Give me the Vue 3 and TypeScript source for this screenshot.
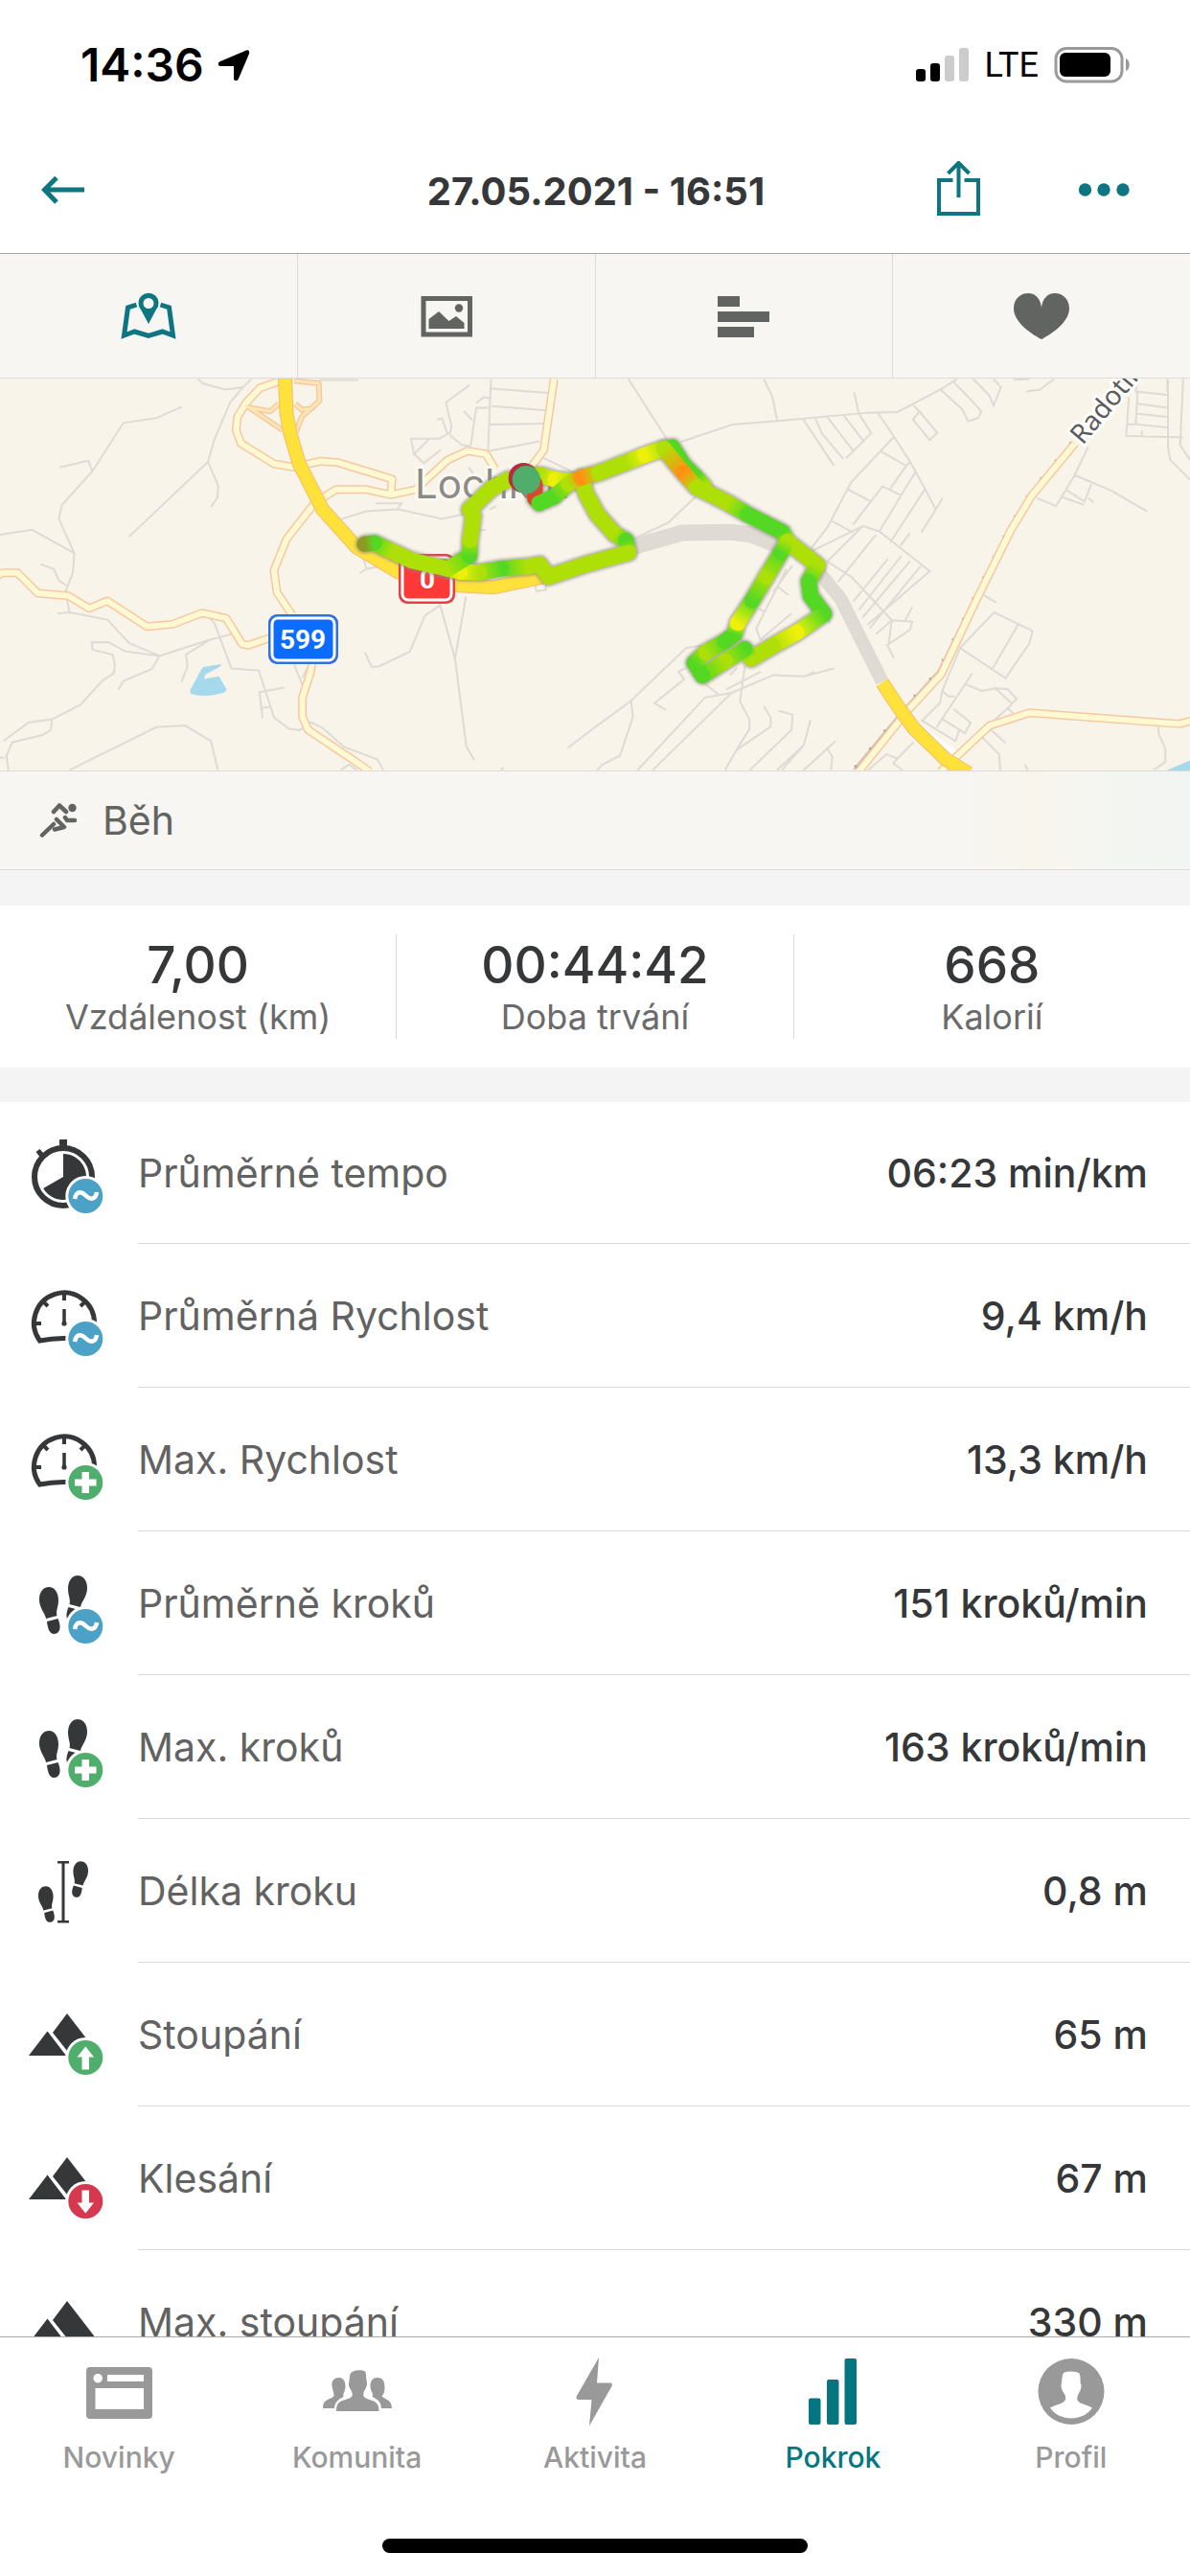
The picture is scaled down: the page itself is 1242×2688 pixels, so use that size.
<script setup lang="ts">
type Badge = 'average' | 'max' | 'up' | 'down' | null
type Icon = 'stopwatch' | 'gauge' | 'steps' | 'stride' | 'mountains'

interface Metric {
  icon: Icon
  badge: Badge
  label: string
  value: string
}

interface TrackPoint {
  x: number
  y: number
  color: string
}

const summary = [
  { value: '7,00', label: 'Vzdálenost (km)' },
  { value: '00:44:42', label: 'Doba trvání' },
  { value: '668', label: 'Kalorií' },
]

const metrics: Metric[] = [
  { icon: 'stopwatch', badge: 'average', label: 'Průměrné tempo', value: '06:23 min/km' },
  { icon: 'gauge', badge: 'average', label: 'Průměrná Rychlost', value: '9,4 km/h' },
  { icon: 'gauge', badge: 'max', label: 'Max. Rychlost', value: '13,3 km/h' },
  { icon: 'steps', badge: 'average', label: 'Průměrně kroků', value: '151 kroků/min' },
  { icon: 'steps', badge: 'max', label: 'Max. kroků', value: '163 kroků/min' },
  { icon: 'stride', badge: null, label: 'Délka kroku', value: '0,8 m' },
  { icon: 'mountains', badge: 'up', label: 'Stoupání', value: '65 m' },
  { icon: 'mountains', badge: 'down', label: 'Klesání', value: '67 m' },
  { icon: 'mountains', badge: null, label: 'Max. stoupání', value: '330 m' },
]

const badgeColor: Record<string, string> = {
  average: '#4ba2c6',
  max: '#4fae6b',
  up: '#4fae6b',
  down: '#d63850',
}

// Track colours run from slow (red) to fast (green).
const pace: Record<string, string> = {
  g: '#55d824',
  l: '#aee008',
  y: '#eef00a',
  o: '#ff9212',
  r: '#d8482c',
  b: '#8f9a22',
}

function track(source: string): TrackPoint[] {
  return source.split(' ').map((item) => {
    const [x, y, c] = item.split(',')
    return { x: Number(x), y: Number(y), color: pace[c] }
  })
}

const tracks: TrackPoint[][] = [
  track('940,115,l 965,110,g 1000,165,g 1040,205,g 1064,232,l'),
  track('680,205,l 695,255,l 730,320,l 785,382,l 820,402,g 828,440,l 700,475,l 578,515,l 550,477,l 510,484,l 430,490,g 360,502,l 300,500,y 262,491,l 150,465,l 85,435,l 32,410,g 2,413,b'),
  track('262,491,l 330,450,g 332,400,l 342,325,l 330,305,l 400,238,l 450,212,l 505,200,l 555,198,l 600,212,y 645,215,l'),
  track('535,225,r 535,270,r 548,285,g 595,265,g 640,225,l 680,205,o 735,190,l 820,158,l 880,134,y 938,114,l 1000,190,o 1042,236,l 1075,252,l 1140,285,l 1200,320,g 1310,376,g 1326,405,l 1420,480,l 1392,530,g 1398,575,g 1440,632,g 1355,690,y 1280,732,l 1212,772,l 1192,742,g 1130,780,l 1060,825,g 1034,785,g 1070,752,l 1130,718,g 1160,695,g 1170,660,y 1215,590,g 1260,515,l 1305,440,g 1326,405,l'),
]

const segments = tracks.flatMap((points, t) =>
  points.slice(1).map((to, i) => ({ id: `pace-${t}-${i}`, from: points[i], to })),
)

const trackLines = tracks.map((points) => points.map((p) => `${p.x},${p.y}`).join(' '))

const streetsWest =
  'M158 313L233 292L243 325L325 178L413 163L479 129M243 325L163 427L155 468L196 573L192 632L172 690L183 752L152 756M196 573L85 502L0 517M108 606L142 621L155 655L174 670' +
  'M522 45L535 59L594 77L640 70L662 45M640 70L606 117L566 225L548 296L575 368L573 404L556 433M548 296L340 523M840 48H945' +
  'M183 752L283 774L340 845L420 884L330 870L285 842L242 843L244 865L297 880L303 912L300 936L269 960L212 1032L137 1076L75 1086L9 1142M137 1076L134 1108L112 1124L32 1146L17 1186L22 1230M0 1193H12' +
  'M183 1230L412 1100L488 1095L556 1142L574 1230M420 884L400 924L325 960L312 986M420 884L553 835L610 818M553 835L490 880L494 917L478 963M553 770L565 785L610 922L682 928L722 1070L760 1104L790 1109L820 1085L850 1102L907 1160L995 1198L1010 1230M749 980L684 994L692 1072M692 1042L712 1038M775 910L797 972M797 950L812 915' +
  'M898 1230L920 1213L940 1230M962 874L979 917L998 916L1080 871L1120 762L1160 730L1199 892L1228 704M1199 892L1229 1158L1250 1200M1496 1163L1568 1100M1320 1230L1328 1222M898 470L965 446L1050 440L1165 469L1240 450M990 422H1058L1047 440' +
  'M950 560L966 620L948 633M966 620L1010 612M1410 670L1414 688L1438 684L1440 665M1255 502H1280M1290 440L1308 430M1237 63L1175 116L1190 188L1186 208L1157 226H1083L1091 272L1130 228M1091 272L1117 300L1162 259M1152 168L1165 164L1180 215M1186 215L1216 244L1240 250L1255 132H1290M1222 142L1245 170M1255 118L1275 100L1290 103' +
  'M1294 45L1286 262L1310 310M1296 74L1444 87M1296 127L1440 140M1290 183L1432 180M1290 263L1422 234M1432 284L1550 348M1235 312L1258 350'

const streetsEast =
  'M88 45L190 228M225 236L362 183L482 172L720 147L797 145L912 76L954 45M445 45L467 97L480 170M683 85L695 150L728 208L662 285M548 166L630 308M580 163L598 210L655 288M612 160L680 262M655 155L710 236M910 76L968 137L983 173L1010 163L1018 143L990 107L943 52M997 45L1040 96L1050 126L1070 70L1050 45M1103 47L1145 45M1137 83L1173 77L1210 45M836 120L855 143L838 168L882 230L902 208L855 143' +
  'M745 147L788 220L830 295L870 378L898 440L860 510M898 440L916 406M788 220L675 358L612 495L565 565M750 262L820 308L832 294M820 308L778 377M664 378L724 414M622 474L680 510M808 398L758 370L680 486M845 325L750 505M870 378L778 540M565 570L706 490L750 507L882 627L718 790M706 490L612 598L676 645L782 776L836 780L830 805L774 848L770 850L787 890M782 776L740 818M836 737L818 775M740 517L640 660M772 590L680 720M808 580L695 745M830 597L705 768M858 612L724 800M830 512L805 550M782 776L774 848' +
  'M265 402L193 480L105 527M505 620L425 800L436 835L518 755M483 676L510 700M432 740L446 750M520 610L470 690M610 765L620 785' +
  'M1300 250L1264 336L1215 430L1165 406M1264 336L1360 383L1455 446M1240 380L1290 416L1308 363M1230 402L1288 426M1300 405L1313 418M1407 100L1400 217L1550 222M1424 83L1508 93M1430 83L1425 182L1508 192M1510 45V250L1516 290L1568 350M1430 120L1508 132M1430 150L1508 160M1550 45L1542 245L1568 290M1402 182H1425M1441 200V217M1424 83L1432 45M1508 83V45' +
  'M1025 700L1057 722M962 860L1052 752L1153 808L1145 845L1082 951L962 860L915 990L932 1007H948M1116 787L1045 928M994 937L900 1100M977 970L1020 990L1055 982L1087 984L1111 1014L1088 1042L1040 1092M1055 982L1100 1030M915 990L910 1025L862 1080L950 1142L960 1108M945 1045L990 1086L975 1118L915 1075M1040 1105L1082 1148M1020 1130L1065 1182L1068 1230M1085 1040L1102 1058' +
  'M0 1100L95 1020L240 860L280 852M95 1020L100 1068L66 1186L20 1213L5 1230M112 1230L290 1010L360 996L470 942L552 946L630 922M552 946L578 932M290 970L325 1000M240 920L220 932L235 955L157 1027L187 1048M157 1027L170 1015M152 1230L360 996M345 986L437 932M395 915L382 1022L407 1077V1106L372 1170L343 1230M445 1037L463 1070V1098L372 1170M483 1050L521 1062L518 1108L408 1230M568 1078L550 1155L480 1230M634 1142L550 1230M612 1165L625 1188L622 1230M550 1155L492 1230M355 942L375 920' +
  'M720 1230L768 1182L797 1195L840 1145M797 1195L786 1210L810 1230M1485 1098V1118L1503 1165V1205L1472 1230M1133 1213L1140 1230'

const roadsWest = [
  'M-5 640L8 632H46L100 694L180 702L235 740L283 717L387 795L455 788L532 754L596 770L638 848L654 852L720 826',
  'M770 760L730 692L722 625L755 530L830 420L885 380H965L1030 396L1095 380L1180 290L1232 263L1280 272L1305 318',
  'M1030 396L1033 348L890 298L845 294L775 312L722 302L635 240L622 200L626 160L648 118L685 72L735 52',
  'M1460 45L1433 260L1400 312',
  'M823 905L818 935L797 1010V1070L812 1108L925 1195L975 1235',
]
const rampsWest = 'M648 130L712 143L735 120M648 125L745 200M775 50L840 58L842 110L795 160L780 205M842 110L820 135L795 138L778 120'
const roadsEast = [
  'M1265 240L1150 400L1095 505L1005 715L912 940L820 1055L695 1235',
  'M910 1235L1040 1095L1145 1056L1540 1090L1575 1080',
]
const motorwayWest = 'M751 40L755 150L765 210L788 300L850 440L940 555L1050 630L1170 668L1300 676L1430 645'
const motorwayEast = 'M757 965L800 1040L840 1103L925 1198L985 1240'

const navItems = [
  { id: 'news', label: 'Novinky' },
  { id: 'community', label: 'Komunita' },
  { id: 'activity', label: 'Aktivita' },
  { id: 'progress', label: 'Pokrok' },
  { id: 'profile', label: 'Profil' },
]
</script>

<template>
  <div class="app">
    <div class="status">
      <div class="status-time">
        <span>14:36</span>
        <svg width="34" height="34" viewBox="225 50 34 34" aria-hidden="true">
          <path d="M254 52C257 50 259 52 258 55L247 81C246 84 242 84 242 81V68H229C225 68 225 64 228 63Z" />
        </svg>
      </div>
      <div class="status-right">
        <svg width="56" height="36" viewBox="957 50 56 36" aria-hidden="true">
          <rect x="957" y="72" width="10" height="13" rx="3" />
          <rect x="972" y="66" width="10" height="19" rx="3" />
          <rect x="987" y="58" width="10" height="27" rx="3" fill="#ccc" />
          <rect x="1002" y="50" width="10" height="35" rx="3" fill="#ccc" />
        </svg>
        <span class="network">LTE</span>
        <svg width="80" height="38" viewBox="1099 49 80 38" aria-hidden="true">
          <rect x="1101" y="50.5" width="69" height="34.5" rx="11" fill="none" stroke="#9a9a9a" stroke-width="3" />
          <rect x="1105" y="55" width="53" height="25" rx="6" />
          <path d="M1174 61C1179 63 1179 72 1174 74Z" fill="#9a9a9a" />
        </svg>
      </div>
    </div>

    <header class="header">
      <div class="header-side">
        <button type="button" class="icon-button" aria-label="Zpět">
          <svg width="48" height="48" viewBox="43 175 48 48" fill="none" stroke="currentColor" stroke-width="5">
            <path d="M89 199H48M60 186.500L47.500 199L60 212" />
          </svg>
        </button>
      </div>
      <h1>27.05.2021 - 16:51</h1>
      <div class="header-side header-actions">
        <button type="button" class="icon-button" aria-label="Sdílet">
          <svg width="48" height="60" viewBox="973 168 48 60" fill="none" stroke="currentColor" stroke-width="4">
            <path d="M991.500 188H977V223H1018V188H1003.500M997.500 206V171M986.500 181L997.500 170L1008.500 181" />
          </svg>
        </button>
        <button type="button" class="icon-button" aria-label="Další">
          <svg width="56" height="48" viewBox="1122 174 56 48" fill="currentColor">
            <circle cx="1130.500" cy="198" r="6.700" /><circle cx="1150" cy="198" r="6.700" /><circle cx="1170" cy="198" r="6.700" />
          </svg>
        </button>
      </div>
    </header>

    <main class="content">
      <div class="tabs">
        <button type="button" class="tab active" aria-label="Mapa">
          <svg width="60" height="60" viewBox="125.500 300 60 60">
            <path d="M143 318L134 321L130 350L141 346L155.500 350.500L170 346L181 350L177 321L168 318" fill="none" stroke="currentColor" stroke-width="5" />
            <path fill="currentColor" fill-rule="evenodd" d="M155.500 338L147.500 323A10.500 10.500 0 1 1 163.500 323ZM155.500 311A5.500 5.500 0 1 0 155.500 322A5.500 5.500 0 1 0 155.500 311Z" />
          </svg>
        </button>
        <button type="button" class="tab" aria-label="Fotky">
          <svg width="60" height="60" viewBox="436 300 60 60" fill="currentColor">
            <rect x="442" y="311.500" width="48.500" height="37.500" fill="none" stroke="currentColor" stroke-width="5" />
            <path d="M447.500 343V333L458 325L468.500 335L476 330L484.500 337V343Z" />
            <circle cx="479" cy="321.500" r="4.200" />
          </svg>
        </button>
        <button type="button" class="tab" aria-label="Úseky">
          <svg width="60" height="60" viewBox="747 300 60 60" fill="currentColor">
            <path d="M750 309H773V320H750ZM750 325H804V336H750ZM750 341H788V352H750Z" />
          </svg>
        </button>
        <button type="button" class="tab" aria-label="Tep">
          <svg width="60" height="60" viewBox="1057 300 60 60" fill="currentColor">
            <path d="M1087 354C1079 350 1058 337 1058 322C1058 312 1065 306 1073 306C1081 306 1086 312 1087 321C1088 312 1093 306 1101 306C1109 306 1116 312 1116 322C1116 337 1095 350 1087 354Z" />
          </svg>
        </button>
      </div>

      <svg class="map" viewBox="0 0 1242 409" role="img" aria-label="Mapa trasy">
        <defs>
          <filter id="track-shadow" x="-5%" y="-5%" width="110%" height="110%">
            <feGaussianBlur stdDeviation="4" />
          </filter>
          <linearGradient
            v-for="s in segments"
            :id="s.id"
            :key="s.id"
            gradientUnits="userSpaceOnUse"
            :x1="s.from.x"
            :y1="s.from.y"
            :x2="s.to.x"
            :y2="s.to.y"
          >
            <stop offset="0" :stop-color="s.from.color" />
            <stop offset="1" :stop-color="s.to.color" />
          </linearGradient>
        </defs>
        <rect width="1242" height="409" fill="#f8f4e9" />

        <g transform="translate(621 -15) scale(.39605 .34439)">
          <path class="tunnel" d="M100 553L230 511L360 509L410 516L480 548" />
          <path class="tunnel narrow" d="M590 630L648 712L757 962" />
          <path class="street" :d="streetsEast" />
          <path class="rail" d="M1256 238L1145 392L1090 497L1000 707L905 930L812 1047L682 1228" />
          <path class="rail dashed" d="M1256 238L1145 392L1090 497L1000 707L905 930L812 1047L682 1228" />
          <path d="M850 1085L950 1170L958 1172L940 1192Z" fill="#fff" />
          <path v-for="d in roadsEast" :key="d" class="road-edge" :d="d" />
          <path v-for="d in roadsEast" :key="d" class="road" :d="d" />
          <path class="motorway-edge" :d="motorwayEast" />
          <path class="motorway" :d="motorwayEast" />
          <path d="M1498 1235L1570 1200V1235Z" fill="#a6d9ec" />
        </g>

        <g transform="translate(0 -15) scale(.39605 .34439)">
          <path class="street" :d="streetsWest" />
          <path d="M534 918L583 909L580 916L541 941L538 954L577 946L597 985L593 994Q545 1012 503 999L501 988Z" fill="#a6d9ec" />
          <path v-for="d in roadsWest" :key="d" class="road-edge" :d="d" />
          <path class="ramp-edge" :d="rampsWest" />
          <path v-for="d in roadsWest" :key="d" class="road" :d="d" />
          <path class="ramp" :d="rampsWest" />
          <path class="motorway-edge" :d="motorwayWest" />
          <path class="motorway" :d="motorwayWest" />
        </g>

        <text class="town" x="433" y="125">Lochkov</text>
        <text class="road-name" x="1130" y="70" transform="rotate(-50 1130 70)">Radotínská</text>

        <rect x="280" y="246" width="73" height="52" rx="9" fill="#2f72dc" />
        <rect x="284" y="250" width="65" height="44" rx="6" fill="#0b6cff" stroke="#fff" stroke-width="3" />
        <text class="shield" x="316" y="282">599</text>
        <rect x="416" y="183" width="59" height="52" rx="9" fill="#dd4447" />
        <rect x="420" y="187" width="51" height="44" rx="6" fill="#ff3838" stroke="#fff" stroke-width="3" />
        <text class="shield" x="446" y="219">0</text>

        <g transform="translate(380 35) scale(.33333)" fill="none" stroke-linecap="round" stroke-linejoin="round">
          <g filter="url(#track-shadow)" stroke="#8a8a80" stroke-opacity=".65" stroke-width="60">
            <polyline v-for="line in trackLines" :key="line" :points="line" />
          </g>
          <line
            v-for="s in segments"
            :key="s.id"
            :x1="s.from.x"
            :y1="s.from.y"
            :x2="s.to.x"
            :y2="s.to.y"
            :stroke="`url(#${s.id})`"
            stroke-width="49"
          />
          <circle cx="499" cy="206" r="47" fill="#b92c40" />
          <circle cx="508" cy="212" r="44" fill="#4fae6c" />
        </g>
      </svg>

      <div class="sport">
        <svg width="40" height="40" viewBox="41 841 40 40" fill="none" stroke="currentColor" stroke-width="4.500" stroke-linecap="round" stroke-linejoin="round" aria-hidden="true">
          <path d="M56 852L62 845.500L69 852M78 861H70L68 858M59 860L67 868L57 870.500M44 876.500L56 865" />
          <circle cx="75.500" cy="848" r="4.200" fill="currentColor" stroke="none" />
        </svg>
        <span>Běh</span>
      </div>

      <section class="summary">
        <div v-for="item in summary" :key="item.label" class="summary-item">
          <strong>{{ item.value }}</strong>
          <span>{{ item.label }}</span>
        </div>
      </section>

      <dl class="metrics">
        <div v-for="m in metrics" :key="m.label" class="metric">
          <svg class="metric-icon" width="144" height="148" viewBox="0 1 144 148" fill="#353739" stroke="#353739" aria-hidden="true">
            <g v-if="m.icon === 'stopwatch'">
              <circle cx="66" cy="79" r="30" fill="none" stroke-width="6" />
              <path d="M66 79V55A24 24 0 1 1 45.200 91ZM62 40H70V50H62ZM37.500 53L41.500 50L46 55L42 59Z" stroke="none" />
            </g>
            <g v-else-if="m.icon === 'gauge'" fill="none">
              <path d="M98.500 83A31.500 31.500 0 1 0 41.500 101Q55 98 71 98.500" stroke-width="5" />
              <path d="M67 50V59M45 60L50 65M89 60L84 65M35 83H43" stroke-width="4" />
              <path d="M67 68V82" stroke-width="3.500" />
              <circle cx="67" cy="83" r="2.600" fill="#353739" stroke="none" />
            </g>
            <g v-else-if="m.icon === 'steps' || m.icon === 'stride'" stroke="none">
              <g
                v-for="t in m.icon === 'steps'
                  ? ['translate(0 0)', 'translate(132 -12) scale(-1 1)']
                  : ['translate(8 25.500) scale(.78 .77)', 'translate(124 -.500) scale(-.78 .77)']"
                :key="t"
                :transform="t"
              >
                <path d="M41 71C41 62 46 58 51 58C57 58 61 64 61 72C61 79 58 83 59.500 88L48 91C47 85 41 80 41 71Z" />
                <path d="M49 94L60.500 91C63 97 64 104 59 106.500C53 108.500 50 104 49 94Z" />
              </g>
              <path v-if="m.icon === 'stride'" d="M60 44H72V46.500H67.500V106H72V108.500H60V106H64.500V46.500H60Z" />
            </g>
            <path v-else d="M70 53L104 97H74L55 73ZM49.500 71.500L69 97H30Z" stroke="none" />

            <g v-if="m.badge" stroke="none">
              <circle cx="89.300" cy="99" r="21" fill="#fff" />
              <circle cx="89.300" cy="99" r="18" :fill="badgeColor[m.badge]" />
              <path v-if="m.badge === 'average'" d="M78 102C80 92 86 95 90 99S100 103 101 95" fill="none" stroke="#fff" stroke-width="4.500" />
              <path v-else-if="m.badge === 'max'" d="M85.500 88H93V95.500H100.500V102.500H93V110H85.500V102.500H78V95.500H85.500Z" fill="#fff" />
              <path v-else-if="m.badge === 'up'" d="M89.300 87.500L98 98.500H93V111.500H85.500V98.500H80.500Z" fill="#fff" />
              <path v-else d="M89.300 111.500L98 100.500H93V87.500H85.500V100.500H80.500Z" fill="#fff" />
            </g>
          </svg>
          <div class="metric-row">
            <dt>{{ m.label }}</dt>
            <dd>{{ m.value }}</dd>
          </div>
        </div>
      </dl>
    </main>

    <footer class="footer">
      <nav class="nav">
        <a v-for="item in navItems" :key="item.id" :href="`#${item.id}`" class="nav-item" :class="{ current: item.id === 'progress' }">
          <svg v-if="item.id === 'news'" width="74" height="74" viewBox="87 2458 74 74" fill="currentColor">
            <path fill-rule="evenodd" d="M94 2470H155Q159 2470 159 2474V2520Q159 2524 155 2524H94Q90 2524 90 2520V2474Q90 2470 94 2470ZM112 2478V2485H150V2478ZM99.500 2492V2514H150V2492ZM102.200 2477A4.700 4.700 0 1 0 102.200 2486.400A4.700 4.700 0 1 0 102.200 2477Z" />
          </svg>
          <svg v-else-if="item.id === 'community'" width="74" height="74" viewBox="336.500 2458 74 74" fill="currentColor">
            <path d="M347 2490C346 2484 350 2481 354 2481C359 2481 361 2485 361 2490C361 2495 358 2498 359 2501C353 2504 350 2507 349.500 2513H337.500C337.500 2506 340 2505 347 2502C351 2500 348 2496 347 2490ZM387 2490C387 2484 390 2481 394 2481C400 2481 402 2485 402 2491C402 2495 401 2499 399 2500C401 2504 409.500 2503 409.500 2513H398.500C398 2506 395 2504 389 2501C391 2498 387 2495 387 2490Z" />
            <path d="M366 2477C368 2473 379 2472 382 2475C383 2480 382.500 2482 383.500 2486C384 2491 381 2493 380 2497C379 2501 381 2502 386 2504C393 2506 396 2508 396 2516H351.500C351.500 2508 354 2506 361 2504C367 2502 369 2501 368 2497C367 2493 364 2491 364.500 2487C365.500 2483 365 2481 366 2477Z" />
          </svg>
          <svg v-else-if="item.id === 'activity'" width="74" height="74" viewBox="583.500 2458 74 74" fill="currentColor">
            <path d="M624.500 2460L622.500 2486.500H637Q639 2487 638 2490L614.500 2531.500L617 2504H603Q600 2503.500 601.500 2500Z" />
          </svg>
          <svg v-else-if="item.id === 'progress'" width="74" height="74" viewBox="831.500 2458 74 74" fill="currentColor">
            <rect x="843.500" y="2502.500" width="12.500" height="27.500" rx="2" /><rect x="862.500" y="2483" width="12.500" height="47" rx="2" /><rect x="881" y="2461" width="12.500" height="69" rx="2" />
          </svg>
          <svg v-else width="74" height="74" viewBox="1080.500 2458 74 74">
            <circle cx="1117.500" cy="2495.500" r="34.500" fill="currentColor" />
            <path fill="#fff" d="M1109 2477C1111 2473.500 1123 2474 1126 2476.500C1128 2481 1126 2485 1128 2489C1128 2495 1125 2497 1124 2501C1122 2508 1131 2508 1139.500 2512.500C1130 2527 1105 2527 1095.500 2512.500C1104 2508 1113 2508 1111.500 2501C1111 2497 1107 2495 1107 2489C1108 2485 1107.500 2481 1109 2477Z" />
          </svg>
          <span>{{ item.label }}</span>
        </a>
      </nav>
      <div class="home-indicator"></div>
    </footer>
  </div>
</template>

<style>
body {
  margin: 0;
}
</style>

<style scoped>
.app {
  box-sizing: border-box;
  display: flex;
  flex-direction: column;
  height: 100vh;
  background: #fff;
  color: #353739;
  font-family: Inter, "Liberation Sans", sans-serif;
}

svg {
  display: block;
}

button {
  padding: 0;
  border: 0;
  background: none;
  color: inherit;
  font: inherit;
}

.status {
  box-sizing: border-box;
  display: flex;
  flex: none;
  align-items: center;
  justify-content: space-between;
  height: 132px;
  padding: 4px 62px 0 84px;
  color: #000;
}

.status-time {
  display: flex;
  align-items: center;
  gap: 14px;
  font-size: 48px;
  font-weight: 600;
  line-height: 56px;
}

.status-right {
  display: flex;
  align-items: center;
  gap: 16px;
}

.network {
  font-family: Roboto, Inter, sans-serif;
  font-size: 36px;
  line-height: 40px;
}

.header {
  display: flex;
  flex: none;
  align-items: center;
  justify-content: space-between;
  height: 132px;
  padding: 0 62px 0 42px;
  border-bottom: 1px solid #a5a5a5;
}

.header-side {
  display: flex;
  flex: 1;
  align-items: center;
}

.header-actions {
  justify-content: flex-end;
  gap: 100px;
}

.header-side,
.tab.active {
  color: #0e7680;
}

h1 {
  margin: 0;
  padding: 4px 0 0 22px;
  font-size: 40px;
  font-weight: 700;
  line-height: 48px;
  white-space: nowrap;
}

.content {
  flex: 1;
  min-height: 0;
  overflow-y: auto;
  scrollbar-width: none;
  background: #f5f4f5;
}

.tabs {
  display: flex;
  height: 129px;
  background: #f7f6f3;
  border-bottom: 1px solid #dcdbd9;
}

.tab {
  display: flex;
  flex: 1;
  align-items: center;
  justify-content: center;
  color: #626462;
}

.tab + .tab {
  border-left: 1px solid #dcdbd9;
}

.map {
  width: 100%;
  height: auto;
}

.map path {
  vector-effect: non-scaling-stroke;
}

.street {
  fill: none;
  stroke: #dedad6;
  stroke-width: 2px;
}

.rail {
  fill: none;
  stroke: #cdbfae;
  stroke-width: 2px;
}

.rail.dashed {
  stroke: #a9a29a;
  stroke-width: 4px;
  stroke-dasharray: 2 22;
}

.tunnel {
  fill: none;
  stroke: #dfdad3;
  stroke-width: 17px;
  stroke-linejoin: round;
}

.tunnel.narrow {
  stroke-width: 14px;
}

.road,
.road-edge,
.ramp,
.ramp-edge,
.motorway,
.motorway-edge {
  fill: none;
  stroke-linejoin: round;
}

.road-edge {
  stroke: #f4c9a2;
  stroke-width: 9px;
}

.road {
  stroke: #fff9d3;
  stroke-width: 6px;
}

.ramp-edge {
  stroke: #f4c9a2;
  stroke-width: 6px;
}

.ramp {
  stroke: #fde6b4;
  stroke-width: 3px;
}

.motorway-edge {
  stroke: #f3bc74;
  stroke-width: 15px;
}

.motorway {
  stroke: #ffe13c;
  stroke-width: 13px;
}

.town {
  fill: #8d8b86;
  stroke: #fbf9f3;
  stroke-width: 6px;
  paint-order: stroke;
  font-size: 42px;
}

.road-name {
  fill: #5c5c5c;
  stroke: #fff;
  stroke-width: 6px;
  paint-order: stroke;
  font-family: "Noto Sans", sans-serif;
  font-size: 28px;
}

.shield {
  fill: #fff;
  font-family: Roboto, sans-serif;
  font-size: 28px;
  font-weight: 700;
  text-anchor: middle;
}

.sport {
  display: flex;
  align-items: center;
  gap: 26px;
  height: 102px;
  padding: 0 41px;
  border-top: 1px solid #dcdbd9;
  border-bottom: 1px solid #dcdbd9;
  background: linear-gradient(90deg, #f7f6f3 80%, #f9f5ed 87%, #f5f6f1 92%, #f1f5f3);
  color: #626462;
  font-size: 41px;
  line-height: 50px;
}

.summary {
  display: flex;
  margin: 37px 0 36px;
  padding: 30px 0;
  background: #fff;
}

.summary-item {
  display: flex;
  flex: 1;
  flex-direction: column;
  align-items: center;
  height: 109px;
}

.summary-item + .summary-item {
  border-left: 1px solid #dadada;
}

.summary-item strong {
  font-size: 53px;
  font-weight: 500;
  line-height: 64px;
}

.summary-item span {
  color: #6a6a6a;
  font-size: 36px;
  line-height: 44px;
}

.metrics {
  margin: 0;
  background: #fff;
}

.metric {
  display: flex;
  align-items: center;
  height: 150px;
}

.metric:first-child {
  height: 148px;
}

.metric-icon {
  flex: none;
}

.metric-row {
  box-sizing: border-box;
  display: flex;
  flex: 1;
  align-items: center;
  justify-content: space-between;
  height: 100%;
  padding-right: 44px;
  border-bottom: 1px solid #d9d9d9;
  font-size: 41px;
  line-height: 50px;
}

.metric-row dt {
  color: #626262;
}

.metric-row dd {
  margin: 0;
  font-weight: 500;
}

.footer {
  display: flex;
  flex: none;
  flex-direction: column;
  align-items: center;
  justify-content: space-between;
  height: 249px;
  border-top: 1px solid #ababab;
}

.nav {
  display: flex;
  width: 100%;
  padding-top: 19px;
}

.nav-item {
  display: flex;
  flex: 1;
  flex-direction: column;
  align-items: center;
  gap: 14px;
  color: #999;
  font-size: 30px;
  font-weight: 500;
  line-height: 36px;
  text-decoration: none;
}

.nav-item.current {
  color: #05757f;
}

.home-indicator {
  width: 444px;
  height: 15px;
  margin-bottom: 24px;
  border-radius: 8px;
  background: #000;
}
</style>
